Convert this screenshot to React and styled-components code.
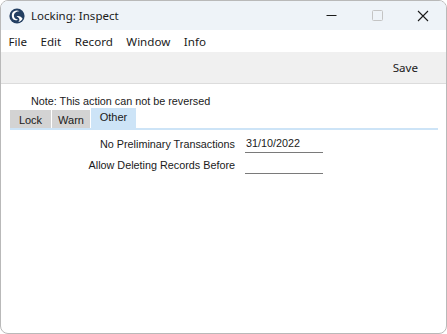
import React from 'react'
import styled, { createGlobalStyle } from 'styled-components';

const GlobalStyle = createGlobalStyle`
  html, body { margin:0; padding:0; background:#ffffff; }
  body { font-family: "Noto Sans", "Open Sans", sans-serif; }
`;

const AppLogo = () => (
  <svg width="16" height="16" viewBox="0 0 16 16">
    <circle cx="8" cy="8" r="7.6" fill="#243f62"/>
    <path d="M3.2 5.2 C4.5 2.6 8 1.8 10.5 3.2 C8 3 5.6 4.4 5 6.8 C4.4 9.4 6.4 11.6 9 11.4 C7.5 12.8 4.8 12.6 3.6 10.6 C2.7 9 2.6 6.8 3.2 5.2 Z" fill="#ffffff"/>
    <path d="M7.5 8.2 C9.8 7.4 12.6 8.6 13.6 10.8 C12.6 12.8 10.8 13.8 9.2 14 C11 12.6 11.2 10.2 7.5 8.2 Z" fill="#ffffff"/>
  </svg>
);

const tabs = [
  { name: 'Lock', width: 42 },
  { name: 'Warn', width: 39 },
  { name: 'Other', width: 46 },
];

export default function App() {
  return (
    <>
      <GlobalStyle/>
      <Window>
        <TitleBar>
          <TitleLeft>
            <AppLogo/>
            <TitleText>Locking: Inspect</TitleText>
          </TitleLeft>
          <Controls>
            <ControlButton>
              <svg width="11" height="11" viewBox="0 0 11 11"><path d="M0.5 5.5 H10.5" stroke="#1a1a1a" strokeWidth="1"/></svg>
            </ControlButton>
            <ControlButton>
              <svg width="11" height="11" viewBox="0 0 11 11"><rect x="0.5" y="0.5" width="10" height="10" rx="1" fill="none" stroke="#c4c4c4" strokeWidth="1"/></svg>
            </ControlButton>
            <ControlButton>
              <svg width="12" height="12" viewBox="0 0 12 12"><path d="M1 1 L11 11 M11 1 L1 11" stroke="#1a1a1a" strokeWidth="1.1"/></svg>
            </ControlButton>
          </Controls>
        </TitleBar>
        <MenuBar>
          {['File', 'Edit', 'Record', 'Window', 'Info'].map(m => <MenuItem key={m}>{m}</MenuItem>)}
        </MenuBar>
        <Toolbar>
          <ToolButton>Save</ToolButton>
        </Toolbar>
        <Content>
          <Note>Note: This action can not be reversed</Note>
          <TabStrip>
            {tabs.map(t => (
              <Tab key={t.name} $active={t.name === 'Other'} $width={t.width}>{t.name}</Tab>
            ))}
          </TabStrip>
          <Form>
            <Label>No Preliminary Transactions</Label>
            <Field>31/10/2022</Field>
            <Label>Allow Deleting Records Before</Label>
            <Field></Field>
          </Form>
        </Content>
      </Window>
    </>
  )
}

const Window = styled.div `
  width:447px;
  height:334px;
  box-sizing:border-box;
  border:1px solid #b9b9b9;
  border-radius:8px;
  overflow:hidden;
  display:flex;
  flex-direction:column;
  background:#ffffff;
`;
const TitleBar = styled.div `
  height:29px;
  background:#eef3f8;
  display:flex;
  align-items:center;
  justify-content:space-between;
  padding-left:8px;
  flex-shrink:0;
`;
const TitleLeft = styled.div `
  display:flex;
  align-items:center;
  gap:6px;
`;
const TitleText = styled.span `
  font-size:11.5px;
  color:#1a1a1a;
`;
const Controls = styled.div `
  display:flex;
  height:100%;
`;
const ControlButton = styled.div `
  width:46px;
  height:100%;
  display:flex;
  align-items:center;
  justify-content:center;
`;
const MenuBar = styled.div `
  height:22px;
  background:#ffffff;
  display:flex;
  align-items:center;
  padding-left:1px;
  flex-shrink:0;
`;
const MenuItem = styled.span `
  font-size:11.6px;
  color:#1a1a1a;
  padding:0 7px 0 6.5px;
`;
const Toolbar = styled.div `
  height:31px;
  background:#f0f0f0;
  border-bottom:1px solid #dcdcdc;
  display:flex;
  align-items:center;
  justify-content:flex-end;
  padding-right:28px;
  flex-shrink:0;
`;
const ToolButton = styled.span `
  font-size:11.6px;
  color:#1a1a1a;
`;
const Content = styled.div `
  flex:1;
  padding:10px 8px 0 9px;
  font-family:"Liberation Sans", Arial, sans-serif;
`;
const Note = styled.div `
  font-size:10.8px;
  color:#1a1a1a;
  padding-left:21px;
  line-height:14px;
`;
const TabStrip = styled.div `
  display:flex;
  align-items:flex-end;
  height:20px;
  border-bottom:2px solid #cde4f7;
`;
const Tab = styled.div `
  font-size:11px;
  color:#1a1a1a;
  width:${p => p.$width}px;
  text-align:center;
  background:${p => p.$active ? '#cde4f7' : '#d3d3d3'};
  border-right:1px solid #ffffff;
  height:${p => p.$active ? '20px' : '18px'};
  line-height:${p => p.$active ? '18px' : '20px'};
  box-sizing:border-box;
`;
const Form = styled.div `
  display:grid;
  grid-template-columns:225px 78px;
  column-gap:10px;
  row-gap:4px;
  margin-top:6px;
  font-size:10.8px;
  color:#1a1a1a;
`;
const Label = styled.div `
  text-align:right;
  line-height:16px;
`;
const Field = styled.div `
  height:16px;
  line-height:15px;
  border-bottom:1px solid #7a7a7a;
  padding-left:1px;
`;
